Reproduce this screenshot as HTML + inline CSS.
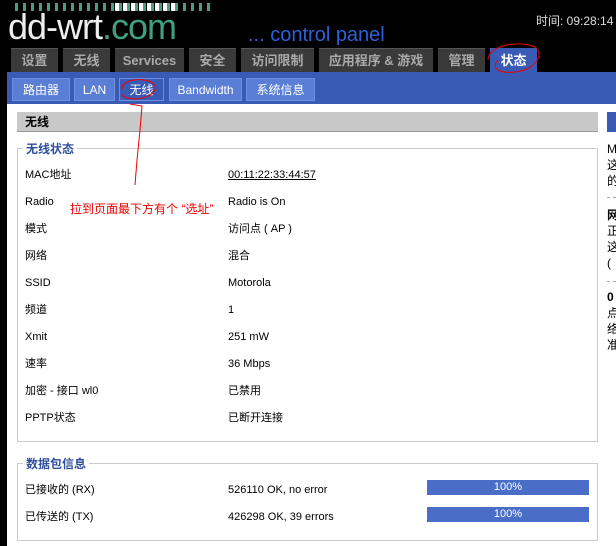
<!DOCTYPE html>
<html><head><meta charset="utf-8"><style>
*{margin:0;padding:0;box-sizing:border-box}
html,body{width:616px;height:546px;overflow:hidden}
body{background:#000;font-family:"Liberation Sans","Noto Sans CJK SC",sans-serif;font-size:11px;position:relative}
.a{position:absolute;white-space:nowrap}
.tab{position:absolute;top:48px;height:24px;background:#3a3a3a;color:#aaa;font-weight:bold;font-size:13px;text-align:center;line-height:24px;border-top:1px solid #555}
.st{position:absolute;top:78px;height:23px;background:#5a7ed6;color:#fff;font-size:12px;text-align:center;line-height:22px;border:1px solid #6d8fdf}
.lbl,.val{position:absolute;color:#000;font-size:11px;line-height:14px;height:14px}
.lbl{left:25px}.val{left:228px}
.bar{position:absolute;left:427px;width:162px;height:15px;background:#4a6ec8;color:#fff;text-align:center;line-height:14px;font-size:11px}
</style></head><body>
<div class="a" style="left:15px;top:3px;width:200px;height:8px;background:repeating-linear-gradient(90deg,#4c9a88 0 3px,transparent 3px 8px)"></div>
<div class="a" style="left:115px;top:3px;width:60px;height:8px;background:repeating-linear-gradient(90deg,#fff 0 4px,transparent 4px 8px)"></div>
<div class="a" style="left:8px;top:8px;font-size:36px;line-height:38px;color:#eee;letter-spacing:-1px">dd-wrt<span style="color:#3fa080">.com</span></div>
<div class="a" style="left:248px;top:24px;font-size:20px;line-height:22px;color:#2f5fd8">... control panel</div>
<div class="a" style="left:536px;top:12px;font-size:12px;color:#ddd">时间: 09:28:14</div>
<div class="tab" style="left:11px;width:47px">设置</div>
<div class="tab" style="left:63px;width:47px">无线</div>
<div class="tab" style="left:115px;width:69px">Services</div>
<div class="tab" style="left:189px;width:47px">安全</div>
<div class="tab" style="left:241px;width:73px">访问限制</div>
<div class="tab" style="left:319px;width:114px">应用程序 &amp; 游戏</div>
<div class="tab" style="left:438px;width:47px">管理</div>
<div class="tab" style="left:490px;width:47px;background:#3a5bb5;color:#fff;border-color:#3a5bb5">状态</div>
<div class="a" style="left:7px;top:72px;width:609px;height:32px;background:#3a5bb5"></div>
<div class="st" style="left:12px;width:58px">路由器</div>
<div class="st" style="left:74px;width:41px">LAN</div>
<div class="st" style="left:119px;width:45px;background:#3a5bb5">无线</div>
<div class="st" style="left:169px;width:73px">Bandwidth</div>
<div class="st" style="left:246px;width:69px">系统信息</div>
<div class="a" style="left:7px;top:104px;width:609px;height:442px;background:#fff"></div>
<div class="a" style="left:17px;top:112px;width:581px;height:20px;background:#c8c8c8;border-bottom:1px solid #999;font-weight:bold;font-size:12px;line-height:20px;padding-left:8px">无线</div>
<div class="a" style="left:607px;top:112px;width:9px;height:20px;background:#3a5bb5"></div>
<div class="a" style="left:17px;top:148px;width:581px;height:294px;border:1px solid #ccc"></div>
<div class="a" style="left:23px;top:141px;background:#fff;padding:0 3px;color:#2f4e9c;font-weight:bold;font-size:12px;line-height:16px">无线状态</div>
<div class="lbl" style="top:168px">MAC地址</div><div class="val" style="top:168px;text-decoration:underline">00:11:22:33:44:57</div>
<div class="lbl" style="top:195px">Radio</div><div class="val" style="top:195px">Radio is On</div>
<div class="lbl" style="top:222px">模式</div><div class="val" style="top:222px">访问点 ( AP )</div>
<div class="lbl" style="top:249px">网络</div><div class="val" style="top:249px">混合</div>
<div class="lbl" style="top:276px">SSID</div><div class="val" style="top:276px">Motorola</div>
<div class="lbl" style="top:303px">频道</div><div class="val" style="top:303px">1</div>
<div class="lbl" style="top:330px">Xmit</div><div class="val" style="top:330px">251 mW</div>
<div class="lbl" style="top:357px">速率</div><div class="val" style="top:357px">36 Mbps</div>
<div class="lbl" style="top:384px">加密 - 接口 wl0</div><div class="val" style="top:384px">已禁用</div>
<div class="lbl" style="top:411px">PPTP状态</div><div class="val" style="top:411px">已断开连接</div>
<div class="a" style="left:17px;top:463px;width:581px;height:78px;border:1px solid #ccc"></div>
<div class="a" style="left:23px;top:456px;background:#fff;padding:0 3px;color:#2f4e9c;font-weight:bold;font-size:12px;line-height:16px">数据包信息</div>
<div class="lbl" style="top:483px">已接收的 (RX)</div><div class="val" style="top:483px">526110 OK, no error</div><div class="bar" style="top:480px">100%</div>
<div class="lbl" style="top:510px">已传送的 (TX)</div><div class="val" style="top:510px">426298 OK, 39 errors</div><div class="bar" style="top:507px">100%</div>
<div class="a" style="left:607px;top:141px;font-size:12px;line-height:16px">M<br>这<br>的</div>
<div class="a" style="left:607px;top:197px;width:9px;border-top:1px dashed #aaa"></div>
<div class="a" style="left:607px;top:207px;font-size:12px;line-height:16px"><b>网</b><br>正<br>这<br>(</div>
<div class="a" style="left:607px;top:281px;width:9px;border-top:1px dashed #aaa"></div>
<div class="a" style="left:607px;top:289px;font-size:12px;line-height:16px"><b>0</b><br>点<br>络<br>准</div>
<svg class="a" style="left:0;top:0" width="616" height="546"><g fill="none" stroke="#e00" stroke-width="1">
<path d="M488 60 C488 45 520 40 535 47 C545 55 535 70 515 72 C495 74 492 66 498 60"/>
<path d="M122 90 C120 78 150 76 155 86 C158 98 130 103 122 95"/>
<path d="M130 104 L142 106 L140 130 L137 160 L135 185"/></g></svg>
<div class="a" style="left:70px;top:202px;color:#e00;font-size:12px;line-height:14px">拉到页面最下方有个 “选址”</div>
</body></html>
